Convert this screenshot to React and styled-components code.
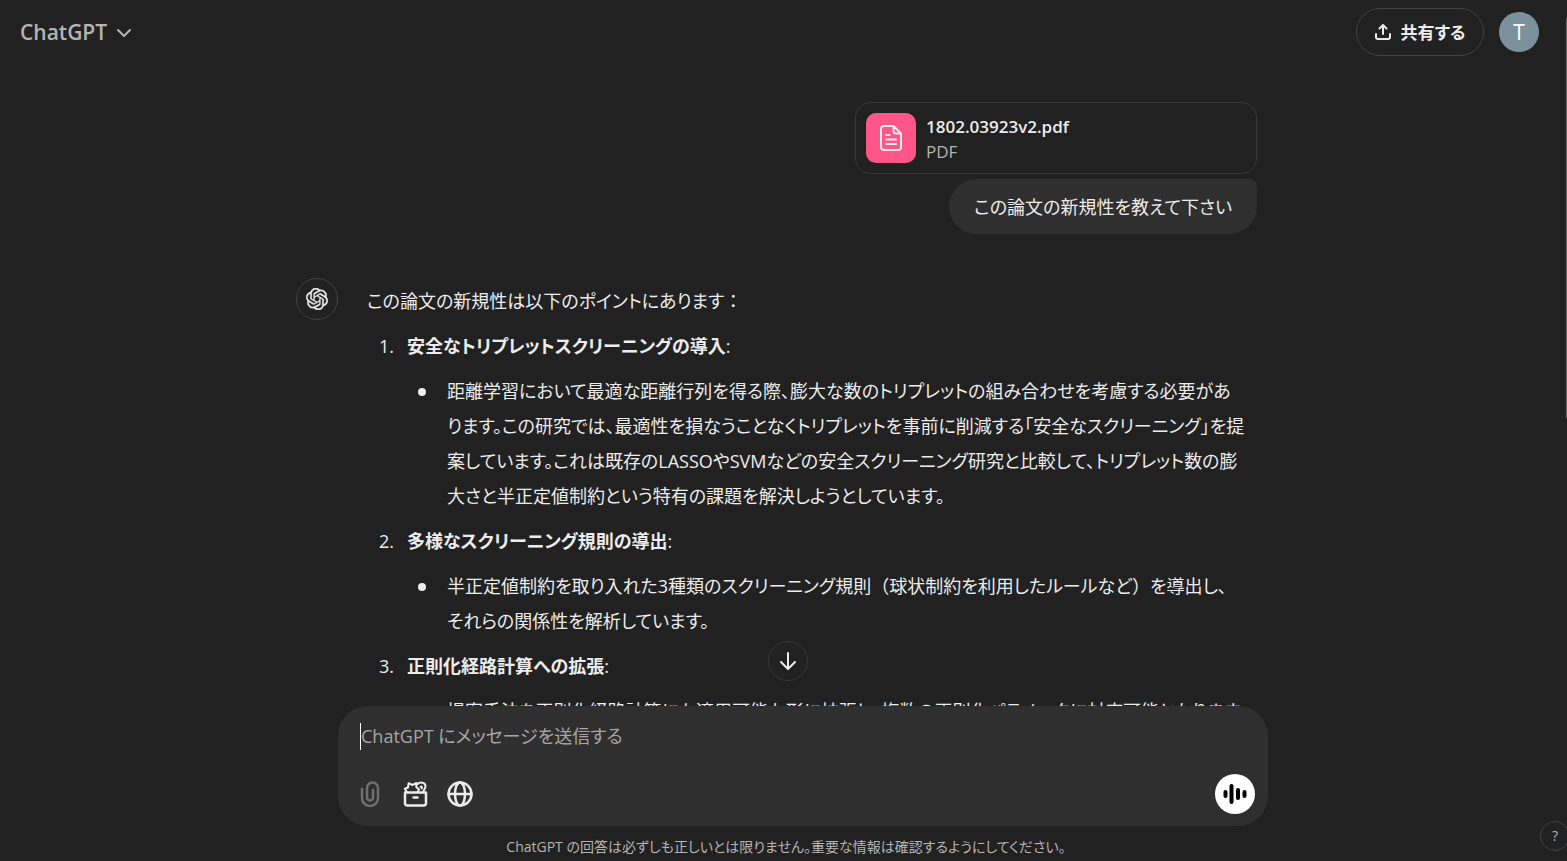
import React from "react";
import styled, { createGlobalStyle } from "styled-components";
import { SiOpenai } from "react-icons/si";

const GlobalStyle = createGlobalStyle`
  *, *::before, *::after { box-sizing: border-box; }
  html, body, #root { height: 100%; }
  body {
    margin: 0;
    background: #212121;
    color: #ececec;
    font-family: "Open Sans", "Noto Sans CJK JP", sans-serif;
    font-feature-settings: "palt";
    font-size: 18px;
    line-height: 35px;
    overflow: hidden;
  }
  button, textarea { font: inherit; font-feature-settings: inherit; color: inherit; }
  button { border: 0; padding: 0; background: none; cursor: pointer; }
  p, ol, ul { margin: 0; padding: 0; }
`;

const Page = styled.div`
  position: relative;
  display: flex;
  flex-direction: column;
  height: 100%;
`;

const Header = styled.header`
  display: flex;
  align-items: center;
  justify-content: space-between;
  height: 64px;
  flex: none;
  padding: 0 28px 0 20px;
`;

const ModelButton = styled.button`
  display: flex;
  align-items: center;
  gap: 9px;
  color: #b4b4b4;
  font-size: 21px;
  font-weight: 600;
`;

const HeaderActions = styled.div`
  display: flex;
  align-items: center;
  gap: 15px;
`;

const ShareButton = styled.button`
  display: flex;
  align-items: center;
  justify-content: center;
  gap: 10px;
  width: 128px;
  height: 48px;
  border: 1px solid #424242;
  border-radius: 24px;
  font-size: 17px;
  font-weight: 700;
`;

const Account = styled.button`
  width: 40px;
  height: 40px;
  border-radius: 50%;
  background: #7b919c;
  color: #fff;
  font-size: 21px;
  line-height: 40px;
`;

const Conversation = styled.main`
  flex: 1;
  min-height: 0;
  overflow: hidden;
  padding: 38px 14px 0 0;
`;

const Thread = styled.div`
  max-width: 961px;
  margin: 0 auto;
  display: flex;
  flex-direction: column;
  gap: 44px;
`;

const UserTurn = styled.section`
  display: flex;
  flex-direction: column;
  align-items: flex-end;
  gap: 5px;
`;

const FileCard = styled.a`
  display: flex;
  align-items: center;
  gap: 10px;
  width: 402px;
  max-width: 100%;
  height: 72px;
  padding: 0 10px;
  border: 1px solid #383838;
  border-radius: 15px;
  color: inherit;
  text-decoration: none;
  font-size: 17px;
  line-height: 25px;
`;

const FileBadge = styled.span`
  display: grid;
  place-items: center;
  width: 50px;
  height: 50px;
  border-radius: 10px;
  background: #ff5588;
`;

const FileText = styled.span`
  display: flex;
  flex-direction: column;
  padding-top: 2px;
`;

const FileName = styled.span`
  font-weight: 600;
`;

const FileType = styled.span`
  color: #b4b4b4;
`;

const Bubble = styled.p`
  padding: 11px 25px 9px;
  border-radius: 28px 8px 28px 28px;
  background: #2f2f2f;
`;

const AssistantTurn = styled.section`
  display: flex;
  align-items: flex-start;
  gap: 29px;
`;

const AssistantMark = styled.span`
  display: grid;
  place-items: center;
  flex: none;
  width: 42px;
  height: 42px;
  border: 1px solid #424242;
  border-radius: 50%;
`;

const Answer = styled.div`
  flex: 1;
  min-width: 0;
  display: flex;
  flex-direction: column;
  gap: 10px;
  padding-top: 6px;
`;

const FullWidth = styled.span`
  font-feature-settings: normal;
`;

const Points = styled.ol`
  display: flex;
  flex-direction: column;
  gap: 10px;
  list-style: none;
  counter-reset: point;
`;

const Point = styled.li`
  display: flex;
  flex-direction: column;
  gap: 10px;
  padding-left: 40px;
  counter-increment: point;
`;

const PointTitle = styled.p`
  display: flex;
  &::before {
    content: counter(point) ".";
    width: 28px;
    margin-left: -28px;
    flex: none;
  }
`;

const Details = styled.ul`
  list-style: none;
`;

const Detail = styled.li`
  display: flex;
  white-space: nowrap;
  &::before {
    content: "";
    flex: none;
    width: 8px;
    height: 8px;
    margin: 14px 21px 0 11px;
    border-radius: 50%;
    background: #ececec;
  }
`;

const Dock = styled.footer`
  position: relative;
  flex: none;
  padding: 0 0 0 5px;
`;

const ScrollDown = styled.button`
  position: absolute;
  bottom: calc(100% + 25px);
  left: calc(50% - 16px);
  display: grid;
  place-items: center;
  width: 40px;
  height: 40px;
  border: 1px solid #383838;
  border-radius: 50%;
  background: #212121;
`;

const ComposerArea = styled.div`
  padding-left: 34px;
`;

const Composer = styled.form`
  max-width: 930px;
  height: 120px;
  margin: 0 auto;
  padding: 17px 13px 12px 12px;
  display: flex;
  flex-direction: column;
  justify-content: space-between;
  border-radius: 30px;
  background: #2f2f2f;
`;

const MessageInput = styled.textarea`
  height: 27px;
  margin: 0 10px;
  padding: 0;
  border: 0;
  border-left: 1px solid #fff;
  outline: 0;
  resize: none;
  overflow: hidden;
  background: transparent;
  line-height: 27px;
  &::placeholder { color: #a6a6a6; opacity: 1; }
`;

const Toolbar = styled.div`
  display: flex;
  gap: 5px;
`;

const ToolButton = styled.button`
  display: grid;
  place-items: center;
  width: 40px;
  height: 40px;
  color: ${(p) => (p.disabled ? "#6f6f6f" : "#ececec")};
`;

const VoiceButton = styled(ToolButton)`
  margin-left: auto;
  border-radius: 50%;
  background: #fff;
  color: #000;
`;

const Disclaimer = styled.p`
  height: 35px;
  padding-top: 8px;
  color: #b4b4b4;
  text-align: center;
  font-size: 14px;
  line-height: 25px;
`;

const HelpButton = styled.button`
  position: absolute;
  right: -3px;
  bottom: 10px;
  width: 30px;
  height: 30px;
  border: 1px solid #424242;
  border-radius: 50%;
  color: #b4b4b4;
  font-size: 14px;
  line-height: 28px;
`;

const ScrollThumb = styled.div`
  position: absolute;
  top: 18px;
  right: 0;
  bottom: 443px;
  width: 1px;
  background: #686868;
`;

const Icon = ({ w = 24, h = w, stroke = 2, children }) => (
  <svg
    width={w}
    height={h}
    viewBox={`0 0 ${w} ${h}`}
    fill="none"
    stroke="currentColor"
    strokeWidth={stroke}
    strokeLinecap="round"
    strokeLinejoin="round"
    aria-hidden="true"
  >
    {children}
  </svg>
);

const points = [
  {
    title: "安全なトリプレットスクリーニングの導入",
    lines: [
      "距離学習において最適な距離行列を得る際、膨大な数のトリプレットの組み合わせを考慮する必要があ",
      "ります。この研究では、最適性を損なうことなくトリプレットを事前に削減する「安全なスクリーニング」を提",
      "案しています。これは既存のLASSOやSVMなどの安全スクリーニング研究と比較して、トリプレット数の膨",
      "大さと半正定値制約という特有の課題を解決しようとしています。",
    ],
  },
  {
    title: "多様なスクリーニング規則の導出",
    lines: [
      <>
        半正定値制約を取り入れた3種類のスクリーニング規則<FullWidth>（</FullWidth>
        球状制約を利用したルールなど<FullWidth>）</FullWidth>を導出し、
      </>,
      "それらの関係性を解析しています。",
    ],
  },
  {
    title: "正則化経路計算への拡張",
    lines: ["提案手法を正則化経路計算にも適用可能な形に拡張し、複数の正則化パラメータに対応可能となります"],
  },
];

export default function App() {
  return (
    <Page>
      <GlobalStyle />
      <Header>
        <ModelButton type="button">
          ChatGPT
          <Icon w={16} h={16} stroke={2}>
            <path d="M2 6l6 6 6-6" />
          </Icon>
        </ModelButton>
        <HeaderActions>
          <ShareButton type="button">
            <Icon w={16} h={18} stroke={2}>
              <path d="M8 11V2M4.500 5.500L8 2l3.500 3.500M1 11v3a2 2 0 0 0 2 2h10a2 2 0 0 0 2-2v-3" />
            </Icon>
            共有する
          </ShareButton>
          <Account type="button">T</Account>
        </HeaderActions>
      </Header>

      <Conversation>
        <Thread>
          <UserTurn>
            <FileCard href="#file">
              <FileBadge>
                <Icon w={22} h={26} stroke={2}>
                  <path d="M13.500 1H4a3 3 0 0 0-3 3v18a3 3 0 0 0 3 3h14a3 3 0 0 0 3-3V8.500L13.500 1v5a2.500 2.500 0 0 0 2.500 2.500h5M6 10h3.500M6 14.500h10M6 19h10" />
                </Icon>
              </FileBadge>
              <FileText>
                <FileName>1802.03923v2.pdf</FileName>
                <FileType>PDF</FileType>
              </FileText>
            </FileCard>
            <Bubble>この論文の新規性を教えて下さい</Bubble>
          </UserTurn>

          <AssistantTurn>
            <AssistantMark>
              <SiOpenai size={22} strokeWidth={0.4} aria-hidden="true" />
            </AssistantMark>
            <Answer>
              <p>
                この論文の新規性は以下のポイントにあります<FullWidth>：</FullWidth>
              </p>
              <Points>
                {points.map(({ title, lines }) => (
                  <Point key={title}>
                    <PointTitle>
                      <strong>{title}</strong>:
                    </PointTitle>
                    <Details>
                      <Detail>
                        <span>
                          {lines.map((line, i) => (
                            <React.Fragment key={i}>
                              {i > 0 && <br />}
                              {line}
                            </React.Fragment>
                          ))}
                        </span>
                      </Detail>
                    </Details>
                  </Point>
                ))}
              </Points>
            </Answer>
          </AssistantTurn>
        </Thread>
      </Conversation>

      <Dock>
        <ScrollDown type="button" aria-label="下へスクロール">
          <Icon w={20} h={20} stroke={2}>
            <path d="M10 2v16M3 11l7 7 7-7" />
          </Icon>
        </ScrollDown>
        <ComposerArea>
          <Composer>
            <MessageInput rows={1} aria-label="メッセージ" placeholder="ChatGPT にメッセージを送信する" />
            <Toolbar>
              <ToolButton type="button" aria-label="添付" disabled>
                <Icon w={20} h={26} stroke={2.5}>
                  <path d="M2 8v9a8 8 0 0 0 16 0V7a5.500 5.500 0 0 0-11 0v9.500a3 3 0 0 0 6 0V9" />
                </Icon>
              </ToolButton>
              <ToolButton type="button" aria-label="ツール">
                <Icon w={26} h={26} stroke={2.5}>
                  <path d="M3 11.500h21V22a2.500 2.500 0 0 1-2.500 2.500h-16A2.500 2.500 0 0 1 3 22zM11.500 16.500h4" />
                  <path d="M5 11L2.800 7.800 6 6.500l.6-4.300L10.500 4l4-2-.2 4L17 8.500 15.500 11" strokeWidth="2" />
                  <path d="M15.500 3.200c2-2.500 8-2.200 8 2 0 2.300-1.700 3.300-2.200 5.800M18.500 5.800c1.200-.6 1.800.4 1.200 1.700" strokeWidth="2" />
                </Icon>
              </ToolButton>
              <ToolButton type="button" aria-label="ウェブ検索">
                <Icon w={26} h={26} stroke={2.5}>
                  <circle cx="13" cy="13" r="11.500" />
                  <ellipse cx="13" cy="13" rx="5" ry="11.500" />
                  <path d="M1.500 13h23" />
                </Icon>
              </ToolButton>
              <VoiceButton type="button" aria-label="音声モード">
                <Icon w={24} h={24} stroke={4}>
                  <path d="M2.500 10v4M8.500 4v16M15 8v8M21.500 10v4" />
                </Icon>
              </VoiceButton>
            </Toolbar>
          </Composer>
        </ComposerArea>
        <Disclaimer>ChatGPT の回答は必ずしも正しいとは限りません。重要な情報は確認するようにしてください。</Disclaimer>
      </Dock>
      <HelpButton type="button" aria-label="ヘルプ">?</HelpButton>
      <ScrollThumb />
    </Page>
  );
}
